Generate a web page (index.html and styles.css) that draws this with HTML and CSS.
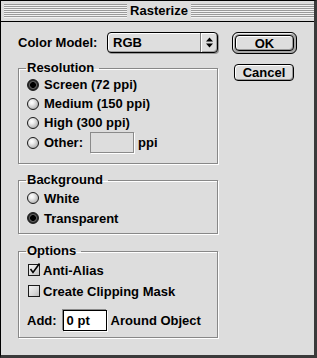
FILE: index.html
```html
<!DOCTYPE html>
<html>
<head>
<meta charset="utf-8">
<link rel="stylesheet" href="styles.css">
</head>
<body>
<div class="window">
  <div class="titlebar">
    <span class="stripes"></span>
    <span class="title">Rasterize</span>
    <span class="stripes"></span>
  </div>
  <div class="content">
    <div class="main">
      <div class="model">
        <span class="label">Color Model:</span>
        <div class="popup">
          <span class="popup-text">RGB</span>
          <span class="popup-arrows">
            <svg width="7" height="11" viewBox="0 0 7 11"><path d="M0 4.5 L3.5 0.5 L7 4.5 Z M0 6.5 L3.5 10.5 L7 6.5 Z" fill="#000"/></svg>
          </span>
        </div>
      </div>
      <fieldset class="group res">
        <legend>Resolution</legend>
        <div class="opt"><span class="radio on"></span>Screen (72 ppi)</div>
        <div class="opt"><span class="radio"></span>Medium (150 ppi)</div>
        <div class="opt"><span class="radio"></span>High (300 ppi)</div>
        <div class="opt other"><span class="radio"></span>Other:<span class="field disabled"></span><span class="unit">ppi</span></div>
      </fieldset>
      <fieldset class="group bg">
        <legend>Background</legend>
        <div class="opt tall"><span class="radio"></span>White</div>
        <div class="opt tall"><span class="radio on"></span>Transparent</div>
      </fieldset>
      <fieldset class="group options">
        <legend>Options</legend>
        <div class="opt tall chk"><span class="checkbox"><svg width="13" height="13" viewBox="0 0 13 13"><path d="M2.5 6 L5 9.5 L11.5 0.5" fill="none" stroke="#000" stroke-width="1.6"/></svg></span>Anti-Alias</div>
        <div class="opt tall chk gap1"><span class="checkbox"></span>Create Clipping Mask</div>
        <div class="add"><span>Add:</span><span class="field edit">0 pt</span><span>Around Object</span></div>
      </fieldset>
    </div>
    <div class="buttons">
      <div class="ring"><div class="btn ok">OK</div></div>
      <div class="btn cancel">Cancel</div>
    </div>
  </div>
</div>
</body>
</html>
```
FILE: styles.css
```css
html, body {
  margin: 0;
  padding: 0;
  background: #dddddd;
}

body {
  font-family: "Liberation Sans", Arial, sans-serif;
  font-weight: bold;
  font-size: 13px;
  color: #000;
}

.window {
  width: 317px;
  height: 358px;
  box-sizing: border-box;
  border: 1px solid #000;
  border-right: 3px solid #3a3a3a;
  border-bottom: 3px solid #3a3a3a;
  background: #dddddd;
  display: flex;
  flex-direction: column;
}

.titlebar {
  height: 20px;
  flex: none;
  border-bottom: 1px solid #000;
  display: flex;
  align-items: center;
  gap: 3px;
  padding: 0 0 0 3px;
  background: #dddddd;
}

.stripes {
  flex: 1;
  height: 14px;
  background: repeating-linear-gradient(to bottom, #9a9a9a 0 1px, #f2f2f2 1px 2px);
}

.title {
  font-size: 13px;
  line-height: 14px;
}

.content {
  display: flex;
  padding: 10px 0 0 17px;
}

.main {
  width: 200px;
  display: flex;
  flex-direction: column;
}

.model {
  display: flex;
  align-items: center;
  height: 21px;
}

.label {
  width: 89px;
  flex: none;
}

.popup {
  width: 111px;
  height: 21px;
  box-sizing: border-box;
  border: 1px solid #000;
  border-radius: 4px;
  background: #dedede;
  box-shadow: inset 1px 1px 0 #fff, inset -1px -1px 0 #a0a0a0, 1px 1px 0 #999;
  display: flex;
  align-items: center;
}

.popup-text {
  flex: 1;
  padding-left: 5px;
}

.popup-arrows {
  width: 17px;
  height: 19px;
  box-sizing: border-box;
  border-left: 1px solid #777;
  display: flex;
  align-items: center;
  justify-content: center;
  box-shadow: inset 1px 0 0 #fff;
}

.popup-arrows svg {
  display: block;
}

.group {
  margin: 0;
  padding: 0 0 0 7px;
  border: 1px solid #888;
  box-shadow: 1px 1px 0 #fff, inset 1px 1px 0 #fff;
  min-width: 0;
}

.group legend {
  padding: 0 5px 0 1px;
  line-height: 12px;
  font-size: 13px;
}

.res {
  margin-top: 9px;
  padding-top: 1px;
  padding-bottom: 10px;
}

.bg {
  margin-top: 10px;
  padding-top: 2px;
  padding-bottom: 5px;
}

.options {
  margin-top: 11px;
  padding-top: 3px;
  padding-bottom: 6px;
}

.opt {
  height: 19px;
  display: flex;
  align-items: center;
  padding-left: 1px;
  white-space: nowrap;
}

.opt.tall {
  height: 20px;
}

.opt.other {
  height: 21px;
}

.gap1 {
  margin-top: 1px;
}

.radio {
  width: 12px;
  height: 12px;
  flex: none;
  box-sizing: border-box;
  border-radius: 50%;
  border: 1px solid #1a1a1a;
  background: radial-gradient(circle at 38% 35%, #ffffff 0, #eeeeee 25%, #bbbbbb 70%, #8a8a8a 100%);
  margin-right: 5px;
}

.radio.on {
  background: radial-gradient(circle at 50% 50%, #000 0 2.6px, #5a5a5a 3.2px 3.6px, #2a2a2a 4.5px);
}

.checkbox {
  width: 12px;
  height: 12px;
  flex: none;
  box-sizing: border-box;
  border: 1px solid #1a1a1a;
  background: linear-gradient(135deg, #f4f4f4 0%, #d8d8d8 60%, #bcbcbc 100%);
  margin: 0 3px 0 1px;
  position: relative;
}

.checkbox svg {
  position: absolute;
  left: -1px;
  top: -2px;
}

.field {
  height: 21px;
  box-sizing: border-box;
  display: flex;
  align-items: center;
}

.field.disabled {
  width: 44px;
  margin: 0 4px 0 7px;
  border: 1px solid #8a8a8a;
  box-shadow: 1px 1px 0 #fff;
  background: #dddddd;
}

.add {
  display: flex;
  align-items: center;
  height: 21px;
  margin-top: 9px;
  padding-left: 1px;
  white-space: nowrap;
}

.field.edit {
  width: 44px;
  margin: 0 4px 0 6px;
  border: 1px solid #000;
  background: #fff;
  padding-left: 3px;
  font-weight: bold;
  box-shadow: -1px -1px 0 #8a8a8a, 1px 1px 0 #fff;
}

.buttons {
  margin-left: 14px;
  display: flex;
  flex-direction: column;
  align-items: flex-start;
}

.ring {
  width: 65px;
  height: 22px;
  box-sizing: border-box;
  border: 1px solid #000;
  border-radius: 6px;
  padding: 2px;
  background: #a8a8a8;
  box-shadow: inset 1px 1px 0 #eee;
}

.btn {
  box-sizing: border-box;
  border: 1px solid #000;
  border-radius: 4px;
  background: #dedede;
  box-shadow: inset 1px 1px 0 #fff, inset -1px -1px 0 #999;
  display: flex;
  align-items: center;
  justify-content: center;
}

.btn.ok {
  width: 100%;
  height: 100%;
}

.btn.cancel {
  width: 60px;
  height: 17px;
  margin: 10px 0 0 2px;
}
```
